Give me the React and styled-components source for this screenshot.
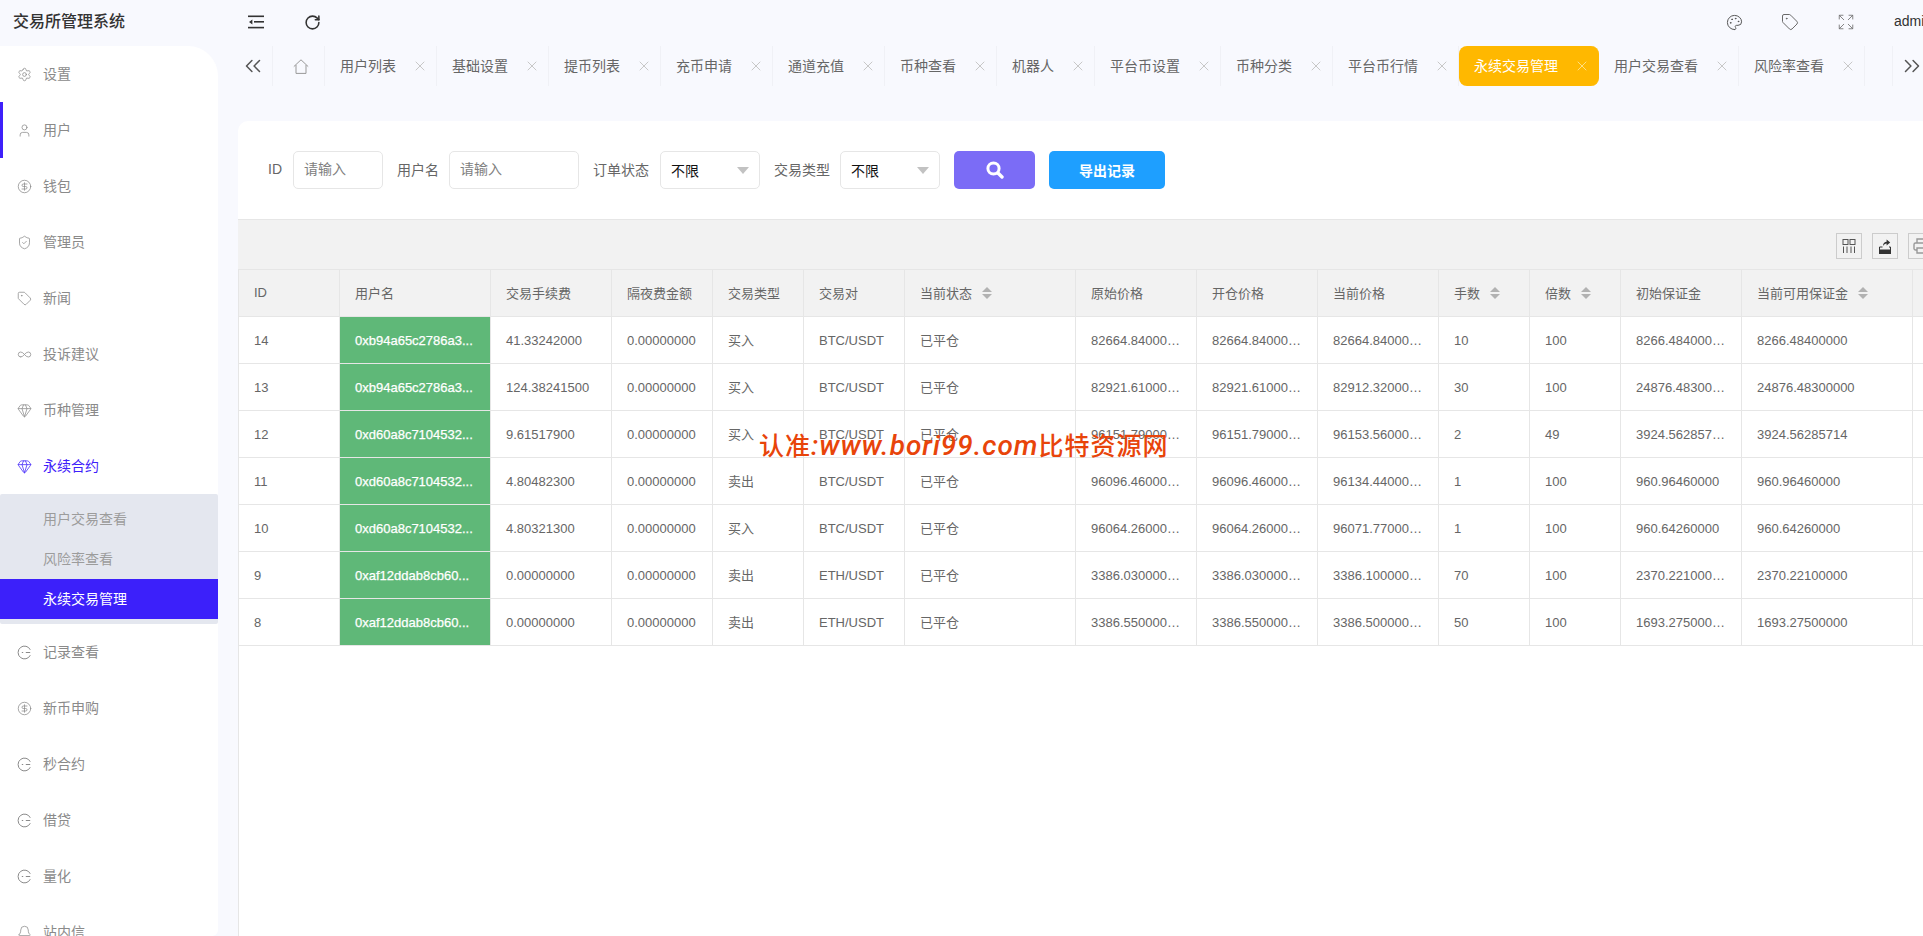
import React from "react";
import styled, { createGlobalStyle } from "styled-components";
import {
  Settings,
  User,
  CircleDollarSign,
  ShieldCheck,
  Tag,
  Infinity as InfinityIcon,
  Gem,
  Bell,
  Palette,
  Expand,
  ChevronsLeft,
  ChevronsRight,
  X,
  RotateCw,
} from "lucide-react";

const GlobalStyle = createGlobalStyle`
  html, body {
    margin: 0;
    padding: 0;
    overflow: hidden;
  }
  * {
    box-sizing: border-box;
  }
  body {
    font: 14px "Liberation Sans", "Noto Sans CJK SC", sans-serif;
    color: #666;
  }
`;

const Page = styled.div`
  position: relative;
  width: 100vw;
  height: 100vh;
  overflow: hidden;
  background: #f8f9fe;
`;

const TopBar = styled.div`
  display: flex;
  align-items: center;
  height: 44px;
  margin-bottom: 2px;
`;

const Brand = styled.div`
  flex: none;
  width: 228px;
  padding: 0 0 4px 13px;
  font-size: 16px;
  font-weight: 500;
  color: #333;
`;

const HeadIcon = styled.div`
  flex: none;
  width: 56px;
  display: flex;
  justify-content: center;
  color: ${(p) => p.$color || "#333"};
`;

const HeadRight = styled.div`
  display: flex;
  align-items: center;
  margin-left: auto;
  margin-right: -30px;
  flex: none;
`;

const AdminName = styled.span`
  margin-left: 20px;
  width: 59px;
  padding-bottom: 2px;
  font-size: 14px;
  color: #333;
`;

const Body = styled.div`
  display: flex;
  height: calc(100vh - 46px);
`;

const Sidebar = styled.div`
  flex: none;
  width: 218px;
  height: 100%;
  overflow: hidden;
  background: #fff;
  border-radius: 0 30px 6px 0;
`;

const MenuItem = styled.div`
  display: flex;
  align-items: center;
  gap: 11px;
  height: 56px;
  padding-left: ${(p) => (p.$marked ? "14px" : "17px")};
  border-left: ${(p) => (p.$marked ? "3px solid #3e20fa" : "none")};
  color: ${(p) => (p.$open ? "#3e20fa" : "#8a8a8a")};
`;

/* the CJK face sits a pixel lower than the reference, this lifts the text only */
const Lifted = styled.span`
  padding-bottom: 2px;
`;

const SubMenu = styled.div`
  padding: 5px 0;
  background: #e4e7ef;
  border-radius: 2px;
`;

const SubItem = styled.div`
  height: 40px;
  line-height: 40px;
  padding-left: 43px;
  color: ${(p) => (p.$active ? "#fff" : "#9c9c9c")};
  background: ${(p) => (p.$active ? "#3c20fa" : "transparent")};
`;

const Main = styled.div`
  flex: none;
  width: 1711px;
  margin-left: 20px;
  display: flex;
  flex-direction: column;
`;

const TabBar = styled.div`
  display: flex;
  height: 40px;
  margin-bottom: 35px;
`;

const ArrowLeft = styled.div`
  flex: none;
  width: 35px;
  display: flex;
  align-items: center;
  padding-left: 2px;
  color: #555;
  border-right: 1px solid #f0f1f6;
`;

const HomeTab = styled.div`
  flex: none;
  width: 52px;
  display: flex;
  align-items: center;
  justify-content: center;
  padding-left: 5px;
  color: #999;
  border-right: 1px solid #f0f1f6;
`;

const Tab = styled.div`
  flex: none;
  display: flex;
  align-items: center;
  gap: 19px;
  padding: 0 11px 0 15px;
  color: ${(p) => (p.$active ? "#fff" : "#666")};
  background: ${(p) => (p.$active ? "#ffb800" : "transparent")};
  border-right: 1px solid ${(p) => (p.$active ? "#ffb800" : "#f0f1f6")};
  border-radius: ${(p) => (p.$active ? "8px" : "0")};
  svg {
    margin: -3px;
    color: ${(p) => (p.$active ? "#ffdf80" : "#c8c8c8")};
  }
`;

const TabGap = styled.div`
  flex: none;
  width: 28px;
  border-right: 1px solid #f0f1f6;
`;

const ArrowRight = styled.div`
  flex: none;
  width: 38px;
  display: flex;
  align-items: center;
  justify-content: center;
  color: #555;
`;

const Card = styled.div`
  flex: 1;
  min-height: 0;
  display: flex;
  flex-direction: column;
  background: #fff;
  border-radius: 10px 0 0 0;
`;

const FilterRow = styled.div`
  display: flex;
  align-items: center;
  gap: 14px;
  padding: 30px 0 30px 30px;
`;

const Field = styled.label`
  display: flex;
  align-items: center;
  gap: ${(p) => p.$gap || 10}px;
`;

const Input = styled.input`
  width: ${(p) => p.$width}px;
  height: 38px;
  padding: 0 10px 2px;
  border: 1px solid #e6e6e6;
  border-radius: 5px;
  outline: none;
  background: #fff;
  font: inherit;
  &::placeholder {
    color: #808080;
  }
`;

const Select = styled.div`
  width: 100px;
  height: 38px;
  display: flex;
  align-items: center;
  justify-content: space-between;
  padding: 0 10px;
  border: 1px solid #e6e6e6;
  border-radius: 5px;
  color: #111;
`;

const SelectCaret = styled.i`
  width: 0;
  height: 0;
  border-style: solid;
  border-width: 7px 6px 0 6px;
  border-color: #c2c2c2 transparent transparent transparent;
`;

const Button = styled.button`
  flex: none;
  width: ${(p) => p.$width}px;
  height: 38px;
  display: flex;
  align-items: center;
  justify-content: center;
  border: none;
  border-radius: 5px;
  background: ${(p) => p.$bg};
  color: #fff;
  font: bold 14px "Liberation Sans", "Noto Sans CJK SC", sans-serif;
`;

const TableBox = styled.div`
  flex: 1;
  border-left: 1px solid #e6e6e6;
`;

const Toolbar = styled.div`
  display: flex;
  justify-content: flex-end;
  gap: 10px;
  height: 51px;
  margin-left: -1px;
  padding: 13px 15px 0 0;
  background: #f2f2f2;
  border-top: 1px solid #e6e6e6;
  border-bottom: 1px solid #e6e6e6;
`;

const ToolButton = styled.div`
  width: 26px;
  height: 26px;
  display: flex;
  align-items: center;
  justify-content: center;
  border: 1px solid #ccc;
  color: #333;
`;

const Table = styled.table`
  table-layout: fixed;
  width: 1774px;
  border-collapse: separate;
  border-spacing: 0;
  font-size: 13px;
  color: #666;
`;

const HeadCell = styled.th`
  height: 47px;
  padding: 0 15px 2px;
  text-align: left;
  font-weight: 400;
  background: #f2f2f2;
  border-right: 1px solid #e6e6e6;
  border-bottom: 1px solid #e6e6e6;
`;

const HeadInner = styled.span`
  display: inline-flex;
  align-items: center;
  gap: 10px;
`;

const Cell = styled.td`
  height: 47px;
  padding: 0 15px ${(p) => (p.$cjk ? "2px" : "0")};
  overflow: hidden;
  white-space: nowrap;
  text-overflow: ellipsis;
  border-right: 1px solid #e6e6e6;
  border-bottom: 1px solid #e6e6e6;
`;

const AddressCell = styled(Cell)`
  text-overflow: clip;
  color: #fff;
  -webkit-text-stroke: 0.25px #fff;
  background: #5fb878;
  background-clip: padding-box;
`;

const SortMark = styled.span`
  display: inline-flex;
  flex-direction: column;
  gap: 2px;
  margin-top: 2px;
  &::before,
  &::after {
    content: "";
    width: 0;
    height: 0;
    border-style: solid;
    border-color: transparent;
  }
  &::before {
    border-width: 0 5px 5px 5px;
    border-bottom-color: #b2b2b2;
  }
  &::after {
    border-width: 5px 5px 0 5px;
    border-top-color: #b2b2b2;
  }
`;

const Watermark = styled.div`
  position: absolute;
  left: 759px;
  top: 426px;
  white-space: nowrap;
  font: 500 25px "Noto Sans CJK SC", sans-serif;
  letter-spacing: 1px;
  color: #e8440a;
`;

const WatermarkLatin = styled.span`
  font: italic 500 28px Roboto, sans-serif;
  letter-spacing: 1px;
`;

const RecordIcon = () => (
  <svg width="15" height="15" viewBox="0 0 15 15" fill="none" stroke="currentColor" strokeWidth="1">
    <path d="M13.3 4.8A6.4 6.4 0 1 0 13.3 10.2" />
    <path d="M4.8 7.5h1.4" />
    <path d="M8.8 7.5h4.4" />
  </svg>
);

const FoldIcon = () => (
  <svg width="16" height="14" viewBox="0 0 16 14" fill="currentColor">
    <rect x="0" y="0.5" width="16" height="1.6" />
    <rect x="6" y="6" width="10" height="1.6" />
    <path d="M4.4 4.4v5l-3.4-2.5z" />
    <rect x="0" y="11.8" width="16" height="1.6" />
  </svg>
);

const HomeIcon = () => (
  <svg width="16" height="15" viewBox="0 0 16 15" fill="none" stroke="currentColor" strokeWidth="1">
    <path d="M0.8 7.6L8 0.8l7.2 6.8" />
    <path d="M3 6v8.4h10V6" />
  </svg>
);

const ColumnsIcon = () => (
  <svg width="14" height="14" viewBox="0 0 14 14" fill="none" stroke="#555" strokeWidth="1">
    <rect x="1" y="0.5" width="5" height="5" />
    <rect x="8" y="0.5" width="5" height="5" />
    <path d="M1.5 7.5V14M5 7.5V14M9 7.5V14M12.5 7.5V14" />
  </svg>
);

const ExportIcon = () => (
  <svg width="14" height="15" viewBox="0 0 14 15" fill="currentColor">
    <path d="M1 10.5h12V15H1z" />
    <path d="M1.5 11V8H4.5M11 8h1.5v3" fill="none" stroke="currentColor" />
    <path d="M5 7C5 4 7 2.8 8.6 2.8V0.4l3.6 3-3.6 3V4.6C7 4.6 6 5.5 5 7z" />
  </svg>
);

const PrintIcon = () => (
  <svg width="16" height="16" viewBox="0 0 16 16" fill="none" stroke="#999" strokeWidth="1.4">
    <path d="M4 5V1h8v4" />
    <rect x="1" y="5" width="14" height="7" rx="1.5" />
    <path d="M4 10h8v5H4z" fill="#f2f2f2" />
  </svg>
);

const SearchIcon = () => (
  <svg width="18" height="18" viewBox="0 0 18 18" fill="none" stroke="#fff">
    <circle cx="7.5" cy="7.5" r="5.6" strokeWidth="3" />
    <path d="M12 12l4 4" strokeWidth="3.4" strokeLinecap="round" />
  </svg>
);

const iconProps = { size: 15, strokeWidth: 1.2 };

const topMenus = [
  { label: "设置", icon: <Settings {...iconProps} /> },
  { label: "用户", icon: <User {...iconProps} />, marked: true },
  { label: "钱包", icon: <CircleDollarSign {...iconProps} /> },
  { label: "管理员", icon: <ShieldCheck {...iconProps} /> },
  { label: "新闻", icon: <Tag {...iconProps} /> },
  { label: "投诉建议", icon: <InfinityIcon {...iconProps} /> },
  { label: "币种管理", icon: <Gem {...iconProps} /> },
  { label: "永续合约", icon: <Gem {...iconProps} />, open: true },
];

const bottomMenus = [
  { label: "记录查看", icon: <RecordIcon /> },
  { label: "新币申购", icon: <CircleDollarSign {...iconProps} /> },
  { label: "秒合约", icon: <RecordIcon /> },
  { label: "借贷", icon: <RecordIcon /> },
  { label: "量化", icon: <RecordIcon /> },
  { label: "站内信", icon: <Bell {...iconProps} /> },
];

const tabs = [
  "用户列表",
  "基础设置",
  "提币列表",
  "充币申请",
  "通道充值",
  "币种查看",
  "机器人",
  "平台币设置",
  "币种分类",
  "平台币行情",
  "永续交易管理",
  "用户交易查看",
  "风险率查看",
];

const columns = [
  { title: "ID", width: 101 },
  { title: "用户名", width: 151 },
  { title: "交易手续费", width: 121 },
  { title: "隔夜费金额", width: 101 },
  { title: "交易类型", width: 91 },
  { title: "交易对", width: 101 },
  { title: "当前状态", width: 171, sort: true },
  { title: "原始价格", width: 121 },
  { title: "开仓价格", width: 121 },
  { title: "当前价格", width: 121 },
  { title: "手数", width: 91, sort: true },
  { title: "倍数", width: 91, sort: true },
  { title: "初始保证金", width: 121 },
  { title: "当前可用保证金", width: 171, sort: true },
  { title: "", width: 100 },
];

const rows = [
  ["14", "0xb94a65c2786a3...", "41.33242000", "0.00000000", "买入", "BTC/USDT", "已平仓", "82664.84000000", "82664.84000000", "82664.84000000", "10", "100", "8266.48400000", "8266.48400000", ""],
  ["13", "0xb94a65c2786a3...", "124.38241500", "0.00000000", "买入", "BTC/USDT", "已平仓", "82921.61000000", "82921.61000000", "82912.32000000", "30", "100", "24876.48300000", "24876.48300000", ""],
  ["12", "0xd60a8c7104532...", "9.61517900", "0.00000000", "买入", "BTC/USDT", "已平仓", "96151.79000000", "96151.79000000", "96153.56000000", "2", "49", "3924.56285714", "3924.56285714", ""],
  ["11", "0xd60a8c7104532...", "4.80482300", "0.00000000", "卖出", "BTC/USDT", "已平仓", "96096.46000000", "96096.46000000", "96134.44000000", "1", "100", "960.96460000", "960.96460000", ""],
  ["10", "0xd60a8c7104532...", "4.80321300", "0.00000000", "买入", "BTC/USDT", "已平仓", "96064.26000000", "96064.26000000", "96071.77000000", "1", "100", "960.64260000", "960.64260000", ""],
  ["9", "0xaf12ddab8cb60...", "0.00000000", "0.00000000", "卖出", "ETH/USDT", "已平仓", "3386.03000000", "3386.03000000", "3386.10000000", "70", "100", "2370.22100000", "2370.22100000", ""],
  ["8", "0xaf12ddab8cb60...", "0.00000000", "0.00000000", "卖出", "ETH/USDT", "已平仓", "3386.55000000", "3386.55000000", "3386.50000000", "50", "100", "1693.27500000", "1693.27500000", ""],
];

const App = () => {
  return (
    <Page>
      <GlobalStyle />
      <TopBar>
        <Brand>交易所管理系统</Brand>
        <HeadIcon>
          <FoldIcon />
        </HeadIcon>
        <HeadIcon>
          <RotateCw size={17} strokeWidth={2.2} />
        </HeadIcon>
        <HeadRight>
          <HeadIcon $color="#555">
            <Palette size={17} strokeWidth={1.4} />
          </HeadIcon>
          <HeadIcon $color="#666">
            <Tag size={18} strokeWidth={1.3} />
          </HeadIcon>
          <HeadIcon $color="#777">
            <Expand size={18} strokeWidth={1.2} />
          </HeadIcon>
          <AdminName>admin</AdminName>
        </HeadRight>
      </TopBar>
      <Body>
        <Sidebar>
          {topMenus.map((m) => (
            <MenuItem key={m.label} $marked={m.marked} $open={m.open}>
              {m.icon}
              <Lifted>{m.label}</Lifted>
            </MenuItem>
          ))}
          <SubMenu>
            <SubItem>用户交易查看</SubItem>
            <SubItem>风险率查看</SubItem>
            <SubItem $active>永续交易管理</SubItem>
          </SubMenu>
          {bottomMenus.map((m) => (
            <MenuItem key={m.label}>
              {m.icon}
              <Lifted>{m.label}</Lifted>
            </MenuItem>
          ))}
        </Sidebar>
        <Main>
          <TabBar>
            <ArrowLeft>
              <ChevronsLeft size={26} strokeWidth={1.4} />
            </ArrowLeft>
            <HomeTab>
              <HomeIcon />
            </HomeTab>
            {tabs.map((t) => (
              <Tab key={t} $active={t === "永续交易管理"}>
                <Lifted>{t}</Lifted>
                <X size={16} strokeWidth={1.5} />
              </Tab>
            ))}
            <TabGap />
            <ArrowRight>
              <ChevronsRight size={26} strokeWidth={1.4} />
            </ArrowRight>
          </TabBar>
          <Card>
            <FilterRow>
              <Field $gap={11}>
                <Lifted>ID</Lifted>
                <Input $width={90} placeholder="请输入" />
              </Field>
              <Field>
                <Lifted>用户名</Lifted>
                <Input $width={130} placeholder="请输入" />
              </Field>
              <Field $gap={11}>
                <Lifted>订单状态</Lifted>
                <Select>
                  不限
                  <SelectCaret />
                </Select>
              </Field>
              <Field>
                <Lifted>交易类型</Lifted>
                <Select>
                  不限
                  <SelectCaret />
                </Select>
              </Field>
              <Button $width={81} $bg="#7b6cf6">
                <SearchIcon />
              </Button>
              <Button $width={116} $bg="#1e9fff">
                导出记录
              </Button>
            </FilterRow>
            <TableBox>
              <Toolbar>
                <ToolButton>
                  <ColumnsIcon />
                </ToolButton>
                <ToolButton>
                  <ExportIcon />
                </ToolButton>
                <ToolButton>
                  <PrintIcon />
                </ToolButton>
              </Toolbar>
              <Table>
                <colgroup>
                  {columns.map((c, i) => (
                    <col key={i} width={c.width} />
                  ))}
                </colgroup>
                <thead>
                  <tr>
                    {columns.map((c, i) => (
                      <HeadCell key={i}>
                        <HeadInner>
                          {c.title}
                          {c.sort && <SortMark />}
                        </HeadInner>
                      </HeadCell>
                    ))}
                  </tr>
                </thead>
                <tbody>
                  {rows.map((r) => (
                    <tr key={r[0]}>
                      {r.map((v, i) =>
                        i === 1 ? (
                          <AddressCell key={i}>{v}</AddressCell>
                        ) : (
                          <Cell key={i} $cjk={i === 4 || i === 6}>
                            {v}
                          </Cell>
                        )
                      )}
                    </tr>
                  ))}
                </tbody>
              </Table>
            </TableBox>
          </Card>
        </Main>
      </Body>
      <Watermark>
        认准<WatermarkLatin>:www.bori99.com</WatermarkLatin>比特资源网
      </Watermark>
    </Page>
  );
};

export default App;
